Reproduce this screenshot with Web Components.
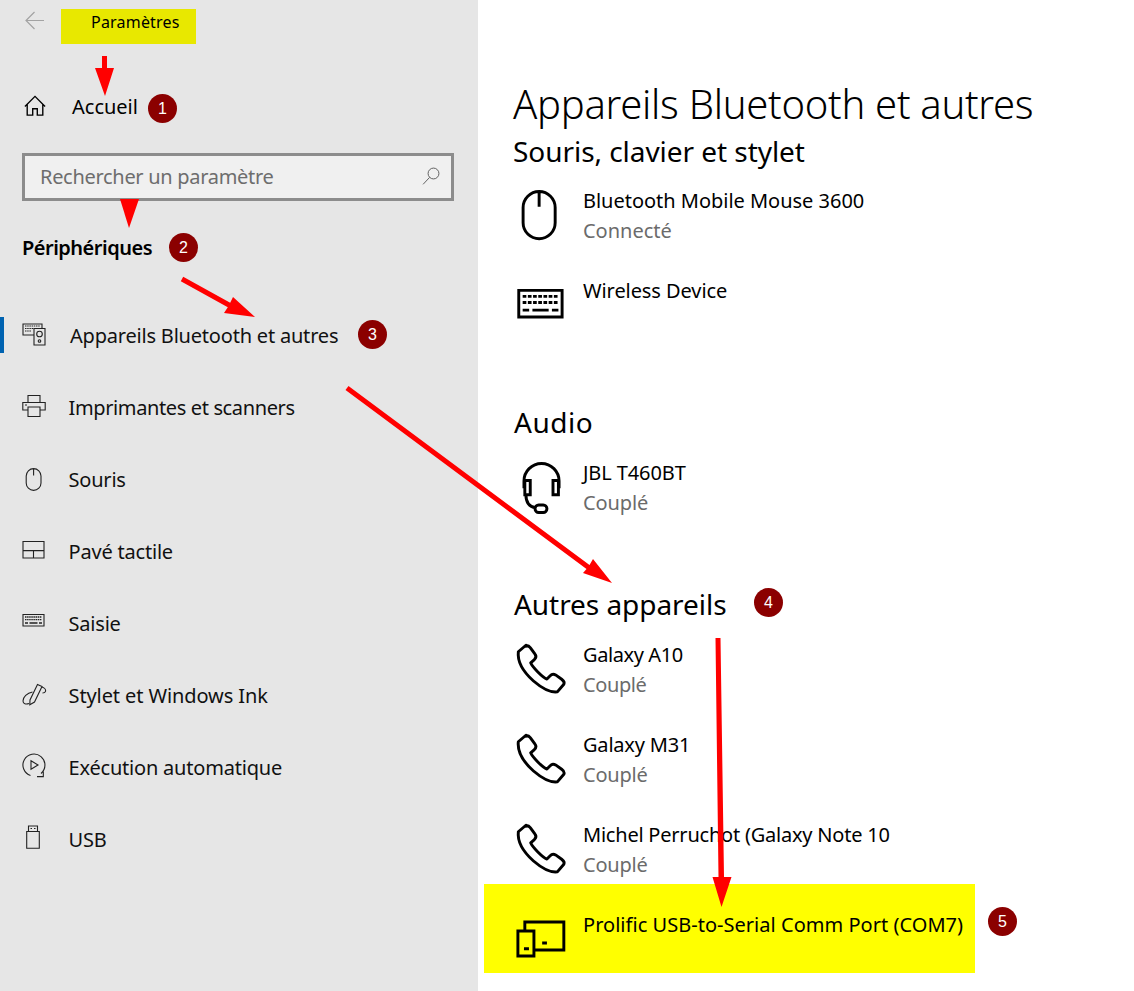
<!DOCTYPE html>
<html lang="fr">
<head>
<meta charset="utf-8">
<title>Paramètres</title>
<style>
  html, body { margin: 0; height: 100%; }
  body { font-family: "Noto Sans", "Open Sans", sans-serif; color: #000; background: #fff; }
</style>
</head>
<body>
<settings-page>
  <settings-sidebar slot="side">
    <side-top label="Paramètres"></side-top>
    <side-home label="Accueil"></side-home>
    <side-search placeholder="Rechercher un paramètre"></side-search>
    <side-heading>Périphériques</side-heading>
    <side-item icon="devices" label="Appareils Bluetooth et autres" active></side-item>
    <side-item icon="printer" label="Imprimantes et scanners" style="letter-spacing:-.37px"></side-item>
    <side-item icon="mouse" label="Souris"></side-item>
    <side-item icon="touchpad" label="Pavé tactile"></side-item>
    <side-item icon="keysmall" label="Saisie"></side-item>
    <side-item icon="pen" label="Stylet et Windows Ink" style="letter-spacing:-.1px"></side-item>
    <side-item icon="autoplay" label="Exécution automatique"></side-item>
    <side-item icon="usb" label="USB"></side-item>
  </settings-sidebar>
  <settings-main slot="main">
    <page-title>Appareils Bluetooth et autres</page-title>
    <device-group heading="Souris, clavier et stylet" below="16">
      <device-row icon="mouse" name="Bluetooth Mobile Mouse 3600" status="Connecté"></device-row>
      <device-row icon="keyboard" name="Wireless Device" style="letter-spacing:-.08px"></device-row>
    </device-group>
    <device-group heading="Audio" above="67" indent="1" style="letter-spacing:.5px">
      <device-row icon="headset" name="JBL T460BT" status="Couplé" style="letter-spacing:-.1px"></device-row>
    </device-group>
    <device-group heading="Autres appareils" above="67" indent="1">
      <device-row icon="phone" name="Galaxy A10" status="Couplé" style="letter-spacing:-.4px"></device-row>
      <device-row icon="phone" name="Galaxy M31" status="Couplé" style="letter-spacing:-.2px"></device-row>
      <device-row icon="phone" name="Michel Perruchot (Galaxy Note 10" status="Couplé" style="letter-spacing:-.22px"></device-row>
      <device-row icon="tablet" name="Prolific USB-to-Serial Comm Port (COM7)" highlight style="letter-spacing:.03px"></device-row>
    </device-group>
  </settings-main>
  <step-badge n="1" style="left:148px;top:94px"></step-badge>
  <step-badge n="2" style="left:169px;top:233px"></step-badge>
  <step-badge n="3" style="left:358px;top:320px"></step-badge>
  <step-badge n="4" style="left:754px;top:588px"></step-badge>
  <step-badge n="5" style="left:988px;top:907px"></step-badge>
  <arrow-layer></arrow-layer>
</settings-page>

<script>
// icons, all drawn on a 24 grid, stroke only
const ICONS = {
  home: '<path d="M1 12.500 12 1.500l11 11M3.500 10v12h6v-7h5v7h6V10"/>',
  search: '<circle cx="15" cy="9" r="6.500"/><path d="M10.300 13.700 2.500 22"/>',
  devices: '<path d="M1 1h19v11H1z"/><path d="M3 3h15M3 5.500h15M3 8h6" stroke-dasharray="1.500 .7"/><path d="M12 5.500h11V22H12z" fill="#e6e6e6"/><circle cx="17.500" cy="11" r="2.800"/><circle cx="17.500" cy="18" r="1.300"/>',
  printer: '<path d="M6 7V.5h12V7M6 15H.8V7.500h22.400V15H18"/><path d="M6 12h12v9.500H6zM3 10h2"/>',
  mouse: '<path d="M4.200 9a7.400 7.400 0 0 1 14.800 0v7a7.400 7.400 0 0 1-14.800 0zM11.600 1.600v7"/>',
  touchpad: '<path d="M1 2.500h21V19H1zM1 11.600h21M11.500 11.600V19"/>',
  keyboard: '<path d="M2.200 5.700h20V18h-20z"/><path d="M4 8.500h16.500M4 11.300h16.500" stroke-dasharray="1.700 .7" stroke-width="1.300"/><path d="M4 14.800h3M8.500 14.800h7.500M17.500 14.800h3" stroke-width="1.300"/>',
  keysmall: '<path d="M1 3.500h21V15H1z"/><path d="M3 6h17M3 8.700h17" stroke-dasharray="1.500 .6" stroke-width="1.300"/><path d="M3 12h3M7.500 12h8M17 12h3" stroke-width="1.300"/>',
  pen: '<path d="M7.800 21.800 8 17 15.500 1.500l4.500 2-7.500 15.500z"/><path d="M10.500 9C5 10 1 14 1 18c0 3 3 3.500 6 2.500M20 4c3 1 4 3 3.500 4.500-.5 1-1.500 1.500-3 1.500"/>',
  autoplay: '<path d="M8.500 20.500A11 11 0 1 1 19 18.500M21.300 16.500v5.100h-6.300"/><path d="M9 5.700 16 10l-7 4.300z"/>',
  usb: '<path d="M4.700 4.500h12.600v16.800H4.700zM6.500 4.500V-1h9v5.500M8.500 1.500h1.500M12 1.500h1.500"/>',
  headset: '<path d="M4.600 13V9.700a8.100 8.100 0 0 1 16.200 0V13M5 9.500h2.500V16H5zM18 9.500h2.500V16H18zM5.500 16c0 3 1 5.500 4.500 6"/><rect x="9.700" y="20.800" width="5.500" height="3.400" rx="1.700"/>',
  phone: '<path stroke-linejoin="round" d="M5.500 1.500 2 4.500C1.500 9 4.500 14 9 18c3.500 3 7.500 5.500 11 5l3-3.500c.5-1-.2-1.700-1-2.300l-2.800-2c-1-.6-1.800-.4-2.500.4l-1.500 1.500c-2-.7-6.700-5.500-7.500-7.500l1.700-1.500c.8-.8 1-1.600.3-2.500l-2.200-3c-.7-.8-1.400-1-2-.6z"/>',
  tablet: '<path d="M5 8.500V4.600h18v12.900H9.200M1.800 8.800h7.400v11.500H1.800zM4.600 17h2.300M13 14.300h2.200"/>'
};

function iconSvg(name, size, weight) {
  return `<svg width="${size}" height="${size}" viewBox="0 0 24 24" fill="none" stroke="currentColor" stroke-width="${weight}" style="overflow:visible">${ICONS[name]}</svg>`;
}

function define(tag, css, render) {
  customElements.define(tag, class extends HTMLElement {
    constructor() {
      super();
      this.attachShadow({ mode: "open" });
    }
    connectedCallback() {
      this.shadowRoot.innerHTML = `<style>${css}</style>${render(this)}`;
    }
  });
}

define("settings-page", `
  :host { display: flex; position: relative; width: 1134px; height: 991px; overflow: hidden; }
`, () => `<slot name="side"></slot><slot name="main"></slot><slot></slot>`);

define("settings-sidebar", `
  :host { display: flex; flex-direction: column; flex: none; box-sizing: border-box; width: 478px; height: 991px; background: #e6e6e6; }
`, () => `<slot></slot>`);

define("side-top", `
  :host { display: flex; align-items: center; height: 44px; padding: 0 0 0 24px; box-sizing: border-box; }
  svg { color: #a3a3a3; margin-top: -4px; }
  .title { margin-left: 16px; width: 135px; height: 35px; margin-top: 9px; background: #e8e800; box-sizing: border-box; padding: 1px 0 0 30px; font-size: 16px; line-height: 24px; letter-spacing: .2px; }
`, el => `<svg width="21" height="21" viewBox="0 0 21 21" fill="none" stroke="currentColor" stroke-width="1.200"><path d="M20 10.500H2M10.500 2 2 10.500l8.500 8.500"/></svg>
  <div class="title">${el.getAttribute("label")}</div>`);

define("side-home", `
  :host { display: flex; align-items: center; height: 60px; margin-top: 32px; padding-left: 24px; font-size: 20px; letter-spacing: 0; }
  span { margin-left: 26px; }
  svg { flex: none; }
`, el => `${iconSvg("home", 22, 1.500)}<span>${el.getAttribute("label")}</span>`);

define("side-search", `
  :host { display: flex; align-items: center; box-sizing: border-box; width: 432px; height: 48px; margin: 17px 0 0 22px; padding: 0 10px 2px 15px; border: 3px solid #8c8c8c; background: #f0f0f0; color: #6d6d6d; font-size: 20px; letter-spacing: -.3px; }
  span { flex: 1; }
  svg { color: #555; }
`, el => `<span>${el.getAttribute("placeholder")}</span>${iconSvg("search", 20, 1.100)}`);

define("side-heading", `
  :host { display: block; margin: 32px 0 0 22px; height: 30px; line-height: 30px; font-size: 20px; font-weight: 600; letter-spacing: -.5px; }
`, () => `<slot></slot>`);

define("side-item", `
  :host { display: flex; align-items: center; position: relative; height: 72px; padding-left: 22px; font-size: 20px; letter-spacing: -.2px; color: #111; }
  :host([active]) { margin-top: 36px; }
  .bar { position: absolute; left: 0; top: 18px; width: 4px; height: 36px; background: #0063b1; }
  svg { flex: none; color: #222; }
  span { margin-left: 22.5px; }
  :host([active]) span { margin-left: 24px; }
`, el => `${el.hasAttribute("active") ? '<div class="bar"></div>' : ""}${iconSvg(el.getAttribute("icon"), 24, 1.100)}<span>${el.getAttribute("label")}</span>`);

define("settings-main", `
  :host { display: flex; flex-direction: column; flex: 1; padding: 76px 0 0 35px; }
`, () => `<slot></slot>`);

define("page-title", `
  :host { display: block; height: 56px; line-height: 56px; font-size: 40px; font-weight: 300; letter-spacing: -.28px; white-space: nowrap; }
`, () => `<slot></slot>`);

define("device-group", `
  :host { display: block; letter-spacing: -.05px; }
  h2 { margin: 0; font-weight: 400; font-size: 28px; line-height: 38px; height: 38px; }
  .rows { display: flex; flex-direction: column; gap: 30px; }
`, el => `<h2 style="margin-top:${el.getAttribute("above") || 0}px;padding-left:${el.getAttribute("indent") || 0}px">${el.getAttribute("heading")}</h2><div class="rows" style="margin-top:${el.getAttribute("below") || 17}px"><slot></slot></div>`);

define("device-row", `
  :host { display: flex; position: relative; isolation: isolate; height: 60px; font-size: 20px; letter-spacing: -.02px; line-height: 30px; }
  .mark { position: absolute; z-index: -1; left: -29px; top: -26px; width: 491px; height: 89px; background: #ffff00; }
  .icon { flex: none; width: 52px; height: 52px; margin: 2px 17px 0 1px; }
  .status { color: #6b6b6b; }
  .name { white-space: nowrap; }
  .icon svg { display: block; }
`, el => {
  const status = el.getAttribute("status");
  return `${el.hasAttribute("highlight") ? '<div class="mark"></div>' : ""}
  <div class="icon">${iconSvg(el.getAttribute("icon"), 52, 1.350)}</div>
  <div><div class="name">${el.getAttribute("name")}</div>${status ? `<div class="status">${status}</div>` : ""}</div>`;
});

define("step-badge", `
  :host { display: flex; align-items: center; justify-content: center; position: absolute; width: 29px; height: 29px; border-radius: 50%; background: #8b0000; color: #fff; font: 16px "Liberation Sans", sans-serif; }
`, el => el.getAttribute("n"));

// the red arrows lie over everything, on the canvas of the page
define("arrow-layer", `
  :host { display: block; position: absolute; inset: 0; pointer-events: none; }
  svg { display: block; }
`, () => `<svg width="1134" height="991" fill="#ff0000" stroke="none">
  <path d="M102 56h5v12h7l-9 28-10-28h7z"/>
  <path d="M120 199h19l-10 29z"/>
  <path d="M180.800 281.200 183.200 276.800 230.200 302.800 233 297 255 317 224 313 227.800 307.200z"/>
  <path d="M345.500 390 348.500 386 589.500 565 593 559 612 583 583 573 586.500 569z"/>
  <path d="M715.500 638h5l3.500 239h7.500l-10 30-9-30h6z"/>
</svg>`);
</script>
</body>
</html>
